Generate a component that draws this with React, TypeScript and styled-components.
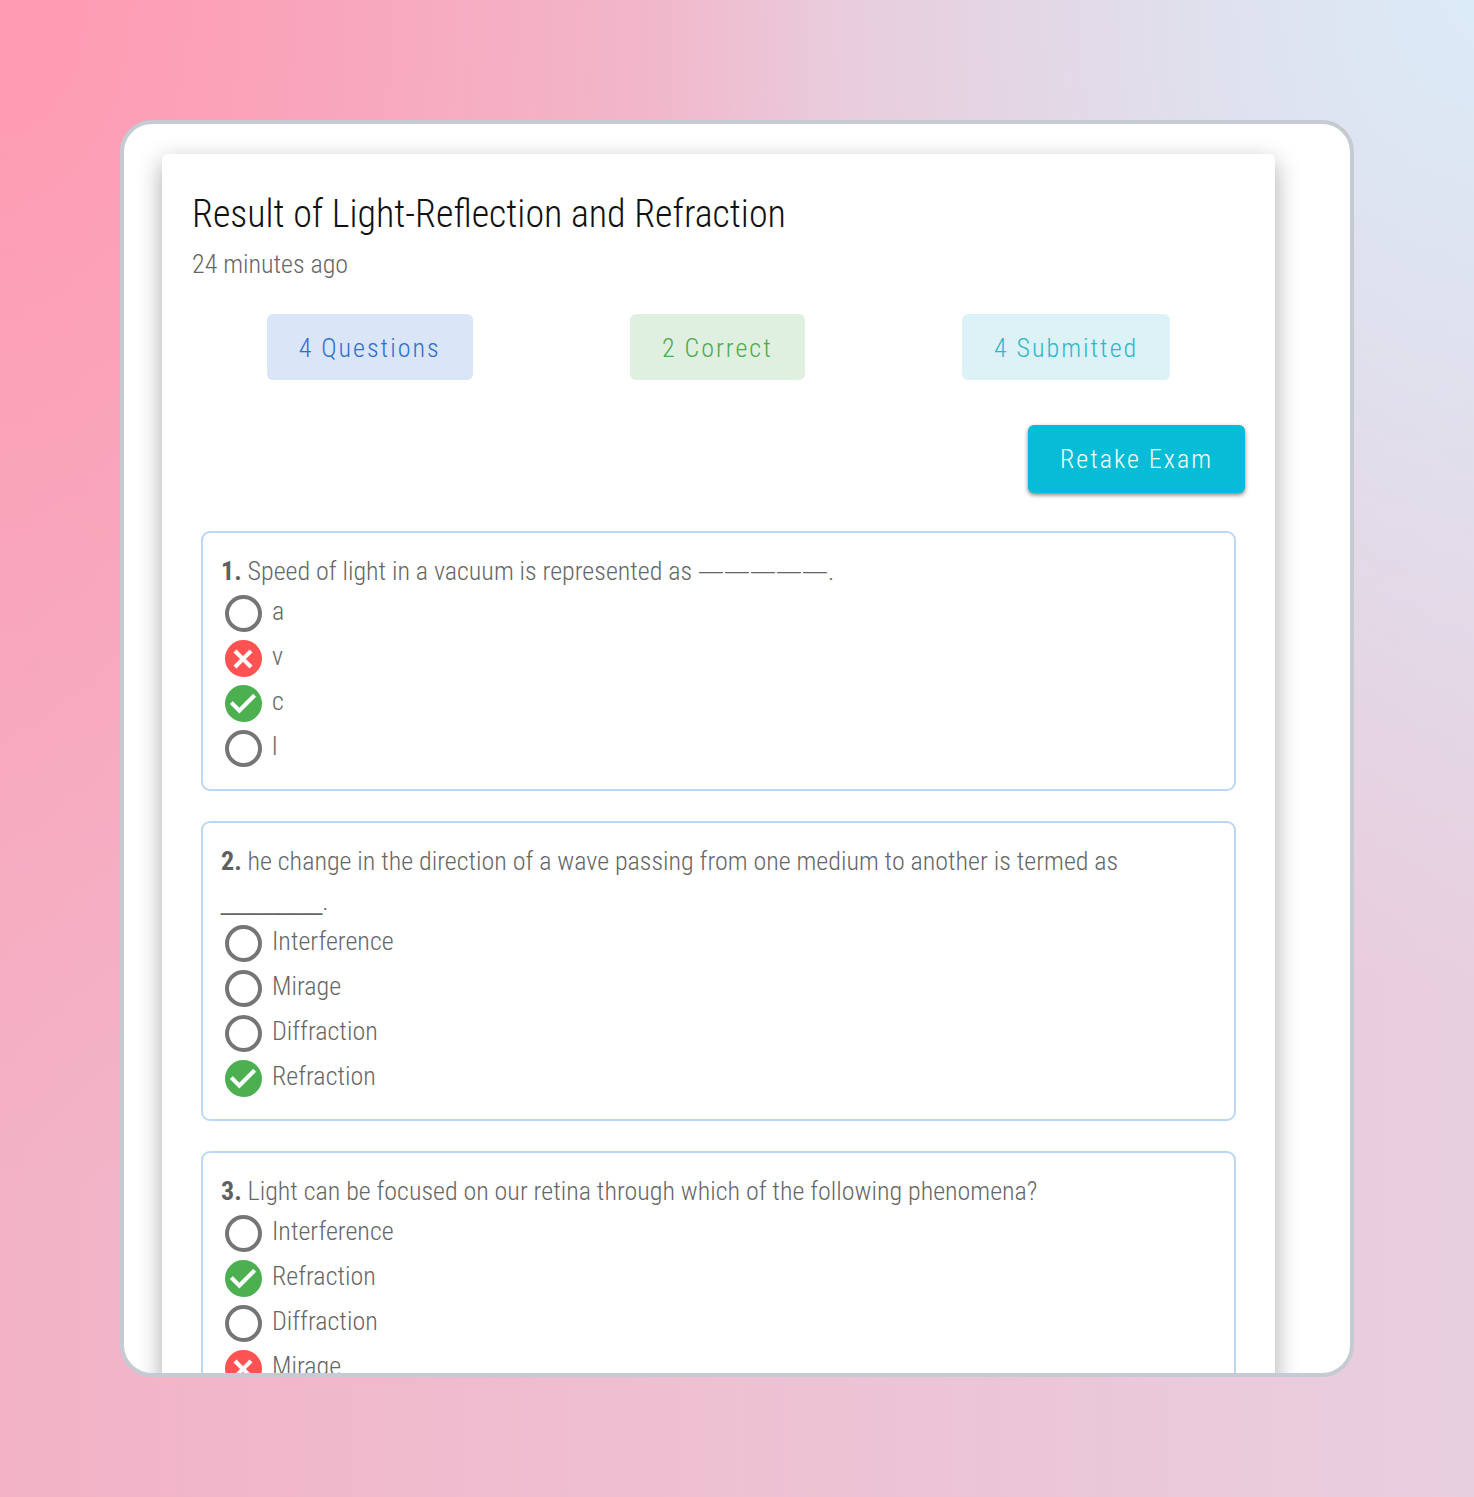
import React from "react";
import styled, { createGlobalStyle } from "styled-components";

const GlobalStyle = createGlobalStyle`
  *, *::before, *::after { box-sizing: border-box; }
  body {
    margin: 0;
    font-family: "Roboto Condensed", "Liberation Sans Narrow", Roboto, sans-serif;
    font-size: 26px;
    font-weight: 300;
    line-height: 40px;
    color: #666;
  }
`;

const Stage = styled.div`
  display: flex;
  height: 100vh;
  min-height: 600px;
  padding: 120px;
  background:
    radial-gradient(ellipse 56% 80% at 0 0, #ff9ab2 0%, rgba(255, 154, 178, 0) 100%),
    radial-gradient(ellipse 56% 66% at 100% 0, #dbebf7 0%, rgba(219, 235, 247, 0) 100%),
    linear-gradient(90deg, #f3b2c6 0%, #e8cfdf 100%);
`;

const Frame = styled.main`
  flex: 1;
  min-width: 0;
  padding: 30px 75px 0 38px;
  overflow: hidden;
  background: #fff;
  border: 4px solid #c6cad2;
  border-radius: 32px;
`;

const Sheet = styled.article`
  padding: 30px;
  background: #fff;
  border-radius: 6px;
  box-shadow: 0 8px 24px rgba(0, 0, 0, 0.34);
`;

const Title = styled.h1`
  margin: 0;
  font-size: 38px;
  font-weight: 300;
  line-height: 60px;
  color: #111;
`;

const Timestamp = styled.p`
  margin: 0;
`;

const Stats = styled.div`
  display: flex;
  justify-content: space-around;
  margin: 30px -4px 0;
`;

const Pill = styled.div<{ $tone: string; $fill: string }>`
  padding: 14px 32px 12px;
  letter-spacing: 2px;
  color: ${(p) => p.$tone};
  background: ${(p) => p.$fill};
  border-radius: 6px;
`;

const Actions = styled.div`
  display: flex;
  justify-content: flex-end;
  margin: 45px 0 38px;
`;

const RetakeButton = styled.button`
  padding: 14px 32px;
  font: inherit;
  letter-spacing: 2px;
  color: #fff;
  background: #06bcd6;
  border: 0;
  border-radius: 6px;
  box-shadow: 0 2px 4px rgba(0, 0, 0, 0.5);
  cursor: pointer;
`;

const Questions = styled.div`
  display: grid;
  gap: 30px;
  margin: 0 9px;
`;

const Question = styled.fieldset`
  min-width: 0;
  margin: 0;
  padding: 18px;
  border: 2px solid #bbd8f3;
  border-radius: 9px;
`;

const Prompt = styled.div`
  b {
    font-weight: 700;
    color: #606060;
  }
`;

const Blank = styled.span<{ $font: string }>`
  font-family: "${(p) => p.$font}", sans-serif;
  line-height: 1;
`;

const Option = styled.label`
  display: flex;
  align-items: flex-start;
  gap: 7px;
  height: 45px;
`;

const Marker = styled.span`
  display: grid;
  place-items: center;
  width: 44px;
  height: 45px;

  > * { grid-area: 1 / 1; }
`;

const Radio = styled.input<{ $color: string; $filled: boolean }>`
  appearance: none;
  width: 37px;
  height: 37px;
  margin: 0;
  background: ${(p) => (p.$filled ? p.$color : "transparent")};
  border: 4px solid ${(p) => p.$color};
  border-radius: 50%;
`;

const Glyph = styled.svg`
  width: 44px;
  height: 44px;
  fill: #fff;
  stroke: #fff;
  pointer-events: none;
`;

type State = "empty" | "wrong" | "right";

const COLORS: Record<State, string> = {
  empty: "#757575",
  wrong: "#ff5252",
  right: "#4caf50",
};

const PATHS: Partial<Record<State, string>> = {
  right: "M10 17 5 12 6.41 10.58 10 14.17 17.59 6.58 19 8Z",
  wrong:
    "M15.59 7 12 10.59 8.41 7 7 8.41 10.59 12 7 15.59 8.41 17 12 13.41 15.59 17 17 15.59 13.41 12 17 8.41Z",
};

const QUESTIONS: { text: React.ReactNode; options: [string, State][] }[] = [
  {
    text: (
      <>
        Speed of light in a vacuum is represented as <Blank $font="Open Sans">—————</Blank>.
      </>
    ),
    options: [["a", "empty"], ["v", "wrong"], ["c", "right"], ["l", "empty"]],
  },
  {
    text: (
      <>
        he change in the direction of a wave passing from one medium to another is termed as{" "}
        <Blank $font="Liberation Sans">_______</Blank>.
      </>
    ),
    options: [
      ["Interference", "empty"],
      ["Mirage", "empty"],
      ["Diffraction", "empty"],
      ["Refraction", "right"],
    ],
  },
  {
    text: "Light can be focused on our retina through which of the following phenomena?",
    options: [
      ["Interference", "empty"],
      ["Refraction", "right"],
      ["Diffraction", "empty"],
      ["Mirage", "wrong"],
    ],
  },
];

export default function App() {
  return (
    <>
      <GlobalStyle />
      <Stage>
        <Frame>
          <Sheet>
            <Title>Result of Light-Reflection and Refraction</Title>
            <Timestamp>24 minutes ago</Timestamp>
            <Stats>
              <Pill $tone="#2f6fcb" $fill="#dae5f7">4 Questions</Pill>
              <Pill $tone="#4caa50" $fill="#e0f0e0">2 Correct</Pill>
              <Pill $tone="#2fb6c9" $fill="#dcf2f7">4 Submitted</Pill>
            </Stats>
            <Actions>
              <RetakeButton type="button">Retake Exam</RetakeButton>
            </Actions>
            <Questions>
              {QUESTIONS.map((question, q) => (
                <Question key={q} aria-labelledby={`prompt-${q}`}>
                  <Prompt id={`prompt-${q}`}>
                    <b>{q + 1}.</b> {question.text}
                  </Prompt>
                  {question.options.map(([label, state], o) => (
                    <Option key={label} htmlFor={`answer-${q}-${o}`}>
                      <Marker>
                        <Radio
                          type="radio"
                          id={`answer-${q}-${o}`}
                          name={`answer-${q}`}
                          disabled
                          $color={COLORS[state]}
                          $filled={state !== "empty"}
                        />
                        {PATHS[state] && (
                          <Glyph viewBox="0 0 24 24" strokeWidth="0.3" aria-hidden="true">
                            <path d={PATHS[state]} />
                          </Glyph>
                        )}
                      </Marker>
                      {label}
                    </Option>
                  ))}
                </Question>
              ))}
            </Questions>
          </Sheet>
        </Frame>
      </Stage>
    </>
  );
}
